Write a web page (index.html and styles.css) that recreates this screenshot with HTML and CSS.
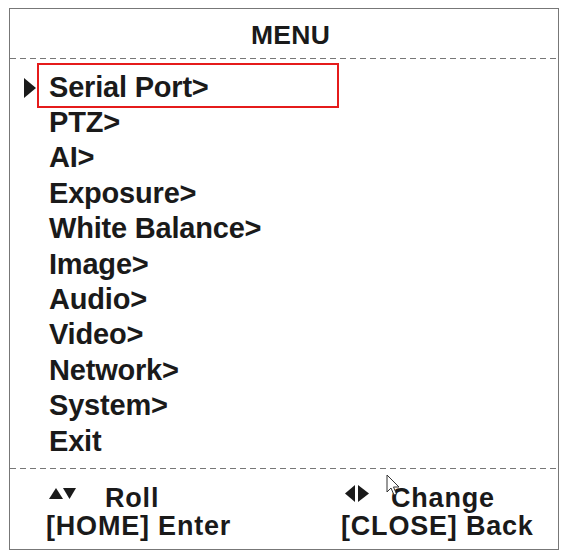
FILE: index.html
```html
<!DOCTYPE html>
<html>
<head>
<meta charset="utf-8">
<title>MENU</title>
<link rel="stylesheet" href="styles.css">
</head>
<body>
	<div class="menu">
		<div class="menu-head">MENU</div>
		<div class="rule"></div>
		<ul class="menu-list">
			<li class="on"><span class="mark"><svg width="12" height="20" viewBox="0 0 12 20"><polygon points="0,0 12,10 0,20" fill="#1a1a1a"/></svg></span>Serial Port&gt;</li>
			<li><span class="mark"></span>PTZ&gt;</li>
			<li><span class="mark"></span>AI&gt;</li>
			<li><span class="mark"></span>Exposure&gt;</li>
			<li><span class="mark"></span>White Balance&gt;</li>
			<li><span class="mark"></span>Image&gt;</li>
			<li><span class="mark"></span>Audio&gt;</li>
			<li><span class="mark"></span>Video&gt;</li>
			<li><span class="mark"></span>Network&gt;</li>
			<li><span class="mark"></span>System&gt;</li>
			<li><span class="mark"></span>Exit</li>
		</ul>
		<div class="rule"></div>
		<div class="menu-foot">
			<div class="key"><svg class="ud" width="27" height="11" viewBox="0 0 27 11"><polygon points="0,11 14,11 7,0" fill="#1a1a1a"/><polygon points="14,0 27,0 20.5,11" fill="#1a1a1a"/></svg>Roll</div>
			<div class="key"><svg class="lr" width="24" height="17" viewBox="0 0 24 17"><polygon points="10,0 10,17 0,8.5" fill="#1a1a1a"/><polygon points="13,0 13,17 24,8.5" fill="#1a1a1a"/></svg>Change</div>
			<div class="key">[HOME] Enter</div>
			<div class="key">[CLOSE] Back</div>
		</div>
	</div>
	<svg class="cursor" width="14" height="22" viewBox="0 0 14 22"><path d="M1 1 L1 18 L5 14 L8 21 L10.5 20 L7.5 13 L13 13 Z" fill="#fff" stroke="#333" stroke-width="1"/></svg>
</body>
</html>
```

FILE: styles.css
```css
body { margin:0; background:#fff; font-family:"Liberation Sans", Arial, sans-serif; font-weight:bold; color:#1a1a1a; }
.menu { width:550px; height:542px; margin:8px 0 0 9px; border:1px solid #777; box-sizing:border-box; }
.menu-head { height:49px; padding:3px 0 0 13px; box-sizing:border-box; text-align:center; font-size:26.5px; line-height:46px; letter-spacing:0.3px; }
.rule { height:1px; background:repeating-linear-gradient(90deg, #777 0 6px, transparent 6px 10px); }
.menu-list { list-style:none; margin:0; padding:10.6px 0 9px 14px; }
.menu-list li { position:relative; display:flex; align-items:center; height:35.4px; font-size:29px; line-height:35.4px; letter-spacing:-0.2px; }
.mark { flex:none; display:flex; align-items:center; width:25px; height:100%; padding-top:2px; box-sizing:border-box; }
.menu-list li.on::after { content:""; position:absolute; left:13px; top:-6.6px; bottom:-3px; width:302px; border:2px solid #e51b1b; box-sizing:border-box; }
.menu-foot { display:grid; grid-template-columns:295px auto; padding:14.8px 0 0 36px; font-size:27px; line-height:28px; letter-spacing:0.8px; }
.key { display:flex; align-items:center; white-space:nowrap; }
.key svg { flex:none; }
.ud { margin:0 29px 8px 3px; }
.lr { margin:0 22px 8px 4px; }
.cursor { position:absolute; left:386px; top:474px; }
```
